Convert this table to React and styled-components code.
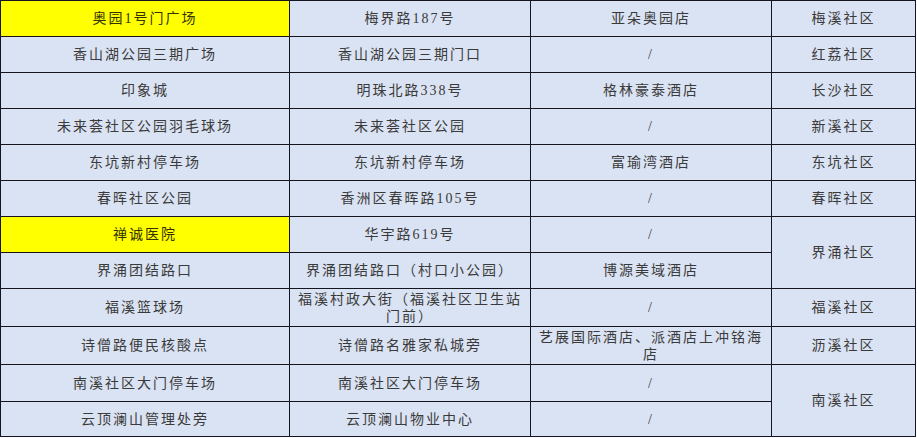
import React from 'react';
import styled, { createGlobalStyle } from 'styled-components';

const GlobalStyle = createGlobalStyle`
  html, body {
    margin: 0;
    padding: 0;
    background: #ffffff;
  }
`;

const Sheet = styled.table`
  border-collapse: collapse;
  table-layout: fixed;
  width: 915px;
  font-family: "Liberation Serif", "Noto Sans CJK SC", serif;
  font-size: 14px;
  color: #3a3a3a;
  background: #dae3f3;
`;

const Col = styled.col`
  width: ${(p) => p.$w}px;
`;

const Row = styled.tr`
  height: ${(p) => p.$h || 36}px;
`;

const Cell = styled.td`
  border: 1px solid #15151f;
  padding: 0 4px;
  text-align: center;
  vertical-align: middle;
  letter-spacing: 2px;
  line-height: 17px;
  background: ${(p) => (p.$hl ? '#ffff00' : 'transparent')};
  color: ${(p) => (p.$hl ? '#333300' : 'inherit')};
`;

const columns = [289, 241, 241, 144];

const rows = [
  { h: 36, cells: [{ t: '奥园1号门广场', hl: true }, { t: '梅界路187号' }, { t: '亚朵奥园店' }, { t: '梅溪社区' }] },
  { h: 36, cells: [{ t: '香山湖公园三期广场' }, { t: '香山湖公园三期门口' }, { t: '/' }, { t: '红荔社区' }] },
  { h: 36, cells: [{ t: '印象城' }, { t: '明珠北路338号' }, { t: '格林豪泰酒店' }, { t: '长沙社区' }] },
  { h: 36, cells: [{ t: '未来荟社区公园羽毛球场' }, { t: '未来荟社区公园' }, { t: '/' }, { t: '新溪社区' }] },
  { h: 36, cells: [{ t: '东坑新村停车场' }, { t: '东坑新村停车场' }, { t: '富瑜湾酒店' }, { t: '东坑社区' }] },
  { h: 36, cells: [{ t: '春晖社区公园' }, { t: '香洲区春晖路105号' }, { t: '/' }, { t: '春晖社区' }] },
  { h: 36, cells: [{ t: '禅诚医院', hl: true }, { t: '华宇路619号' }, { t: '/' }, { t: '界涌社区', span: 2 }] },
  { h: 36, cells: [{ t: '界涌团结路口' }, { t: '界涌团结路口（村口小公园）' }, { t: '博源美域酒店' }] },
  { h: 38, cells: [{ t: '福溪篮球场' }, { t: ['福溪村政大街（福溪社区卫生站', '门前）'] }, { t: '/' }, { t: '福溪社区' }] },
  { h: 38, cells: [{ t: '诗僧路便民核酸点' }, { t: '诗僧路名雅家私城旁' }, { t: ['艺展国际酒店、派酒店上冲铭海', '店'] }, { t: '沥溪社区' }] },
  { h: 37, cells: [{ t: '南溪社区大门停车场' }, { t: '南溪社区大门停车场' }, { t: '/' }, { t: '南溪社区', span: 2 }] },
  { h: 35, cells: [{ t: '云顶澜山管理处旁' }, { t: '云顶澜山物业中心' }, { t: '/' }] },
];

const renderText = (t) =>
  Array.isArray(t)
    ? t.map((line, i) => (
        <React.Fragment key={i}>
          {i > 0 && <br />}
          {line}
        </React.Fragment>
      ))
    : t;

export default function App() {
  return (
    <>
      <GlobalStyle />
      <Sheet>
        <colgroup>
          {columns.map((w, i) => (
            <Col key={i} $w={w} />
          ))}
        </colgroup>
        <tbody>
          {rows.map((r, i) => (
            <Row key={i} $h={r.h}>
              {r.cells.map((c, j) => (
                <Cell key={j} $hl={c.hl} rowSpan={c.span || 1}>
                  {renderText(c.t)}
                </Cell>
              ))}
            </Row>
          ))}
        </tbody>
      </Sheet>
    </>
  );
}
